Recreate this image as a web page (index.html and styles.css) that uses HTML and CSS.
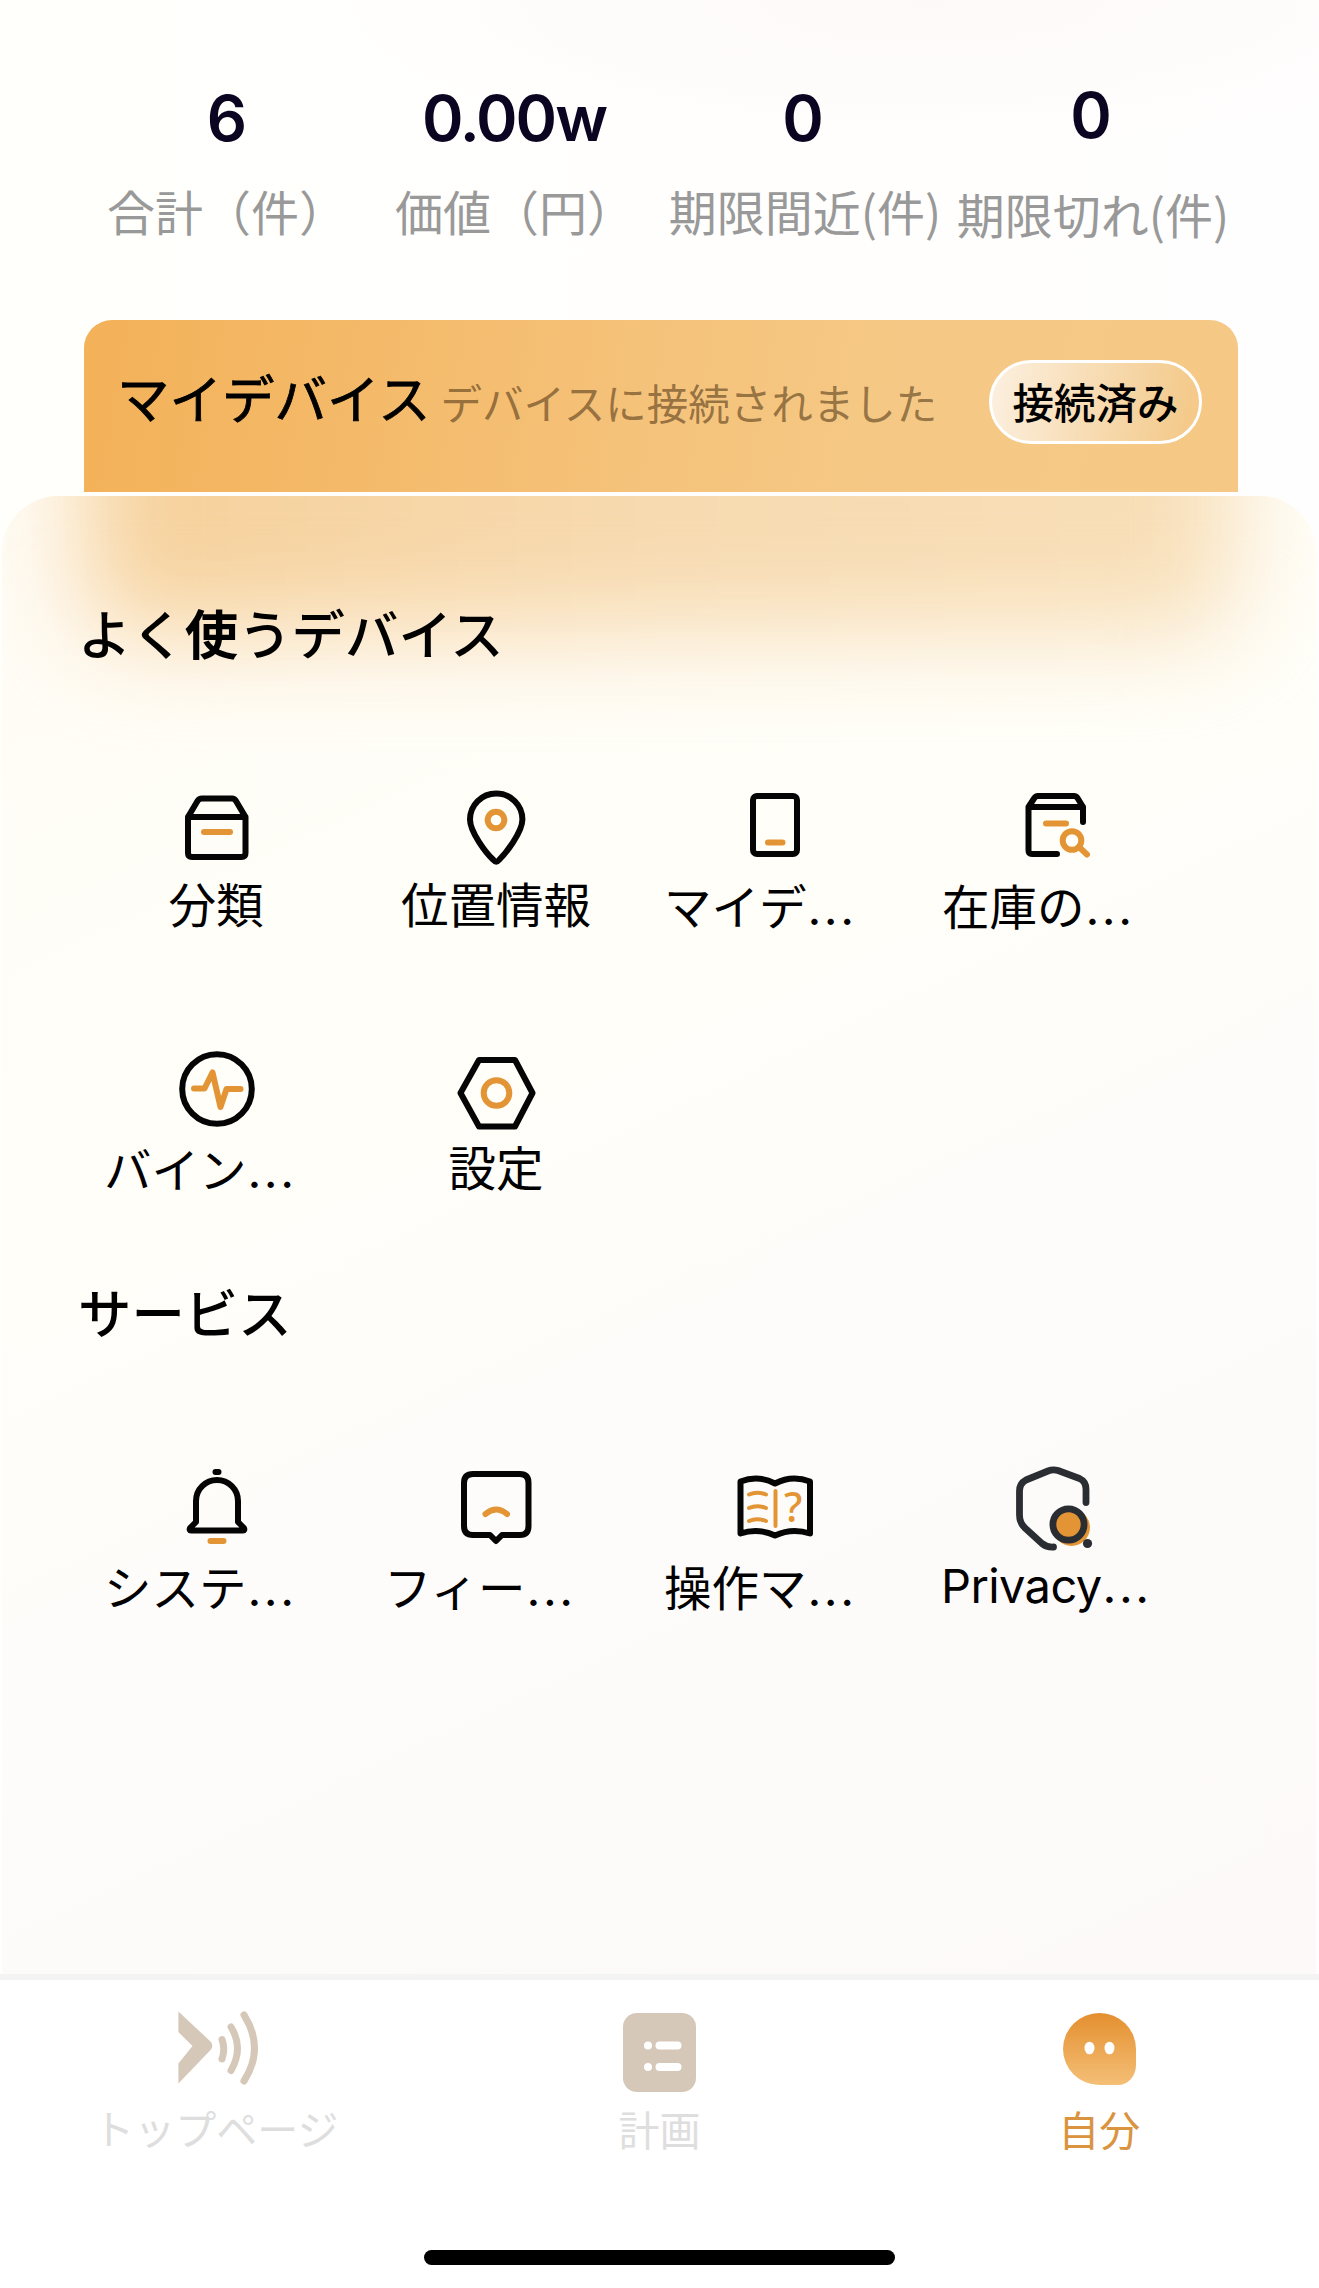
FILE: index.html
```html
<!DOCTYPE html>
<html lang="ja">
<head>
    <meta charset="UTF-8">
    <meta name="viewport" content="width=device-width, initial-scale=1.0">
    <title>自分</title>
    <link rel="stylesheet" href="styles.css">
</head>
<body>
<div class="app">
    <section class="stats">
        <div class="stat"><strong>6</strong><span>合計（件）</span></div>
        <div class="stat"><strong>0.00w</strong><span>価値（円）</span></div>
        <div class="stat stat-wide"><strong>0</strong><span>期限間近(件)</span></div>
        <div class="stat stat-wide stat-expired"><strong>0</strong><span>期限切れ(件)</span></div>
    </section>

    <section class="device-card">
        <h1>マイデバイス</h1>
        <p>デバイスに接続されました</p>
        <button type="button">接続済み</button>
    </section>

    <main class="panel">
        <h2>よく<b>使</b>うデバイス</h2>
        <div class="menu menu-devices">
            <div class="item">
                <svg class="icon" viewBox="0 0 90 90">
                    <path d="M16 32L25.5 16Q27 13.500 30 13.500H60Q62.500 13.500 64 16L73.500 32V68Q73.500 72 69.500 72H20Q16 72 16 68ZM16 32H73.500"/>
                    <path class="accent" d="M32 47H58"/>
                </svg>
                <span class="label">分類</span>
            </div>
            <div class="item">
                <svg class="icon" viewBox="0 0 90 90">
                    <path d="M41.500 75C34 68 18 47 18 34.500A26.200 26 0 0 1 70.400 34.500C70.400 47 54 68 47 75Q44.200 78.500 41.500 75Z"/>
                    <circle class="accent" cx="44" cy="35" r="8.300"/>
                </svg>
                <span class="label">位置情報</span>
            </div>
            <div class="item">
                <svg class="icon" viewBox="0 0 90 90">
                    <rect x="21" y="11" width="44" height="58" rx="4"/>
                    <path class="accent" d="M36 57.500H50.500"/>
                </svg>
                <span class="label cut low">マイデ<i>...</i></span>
            </div>
            <div class="item">
                <svg class="icon" viewBox="0 0 90 90">
                    <path d="M45 69H20Q16.500 69 16.500 65.500V22L22 13.500Q23.500 11 26 11H62Q64 11 65.500 13L71 22V37M16.500 22H71"/>
                    <path class="accent" d="M34 38.500H54M67 62L75 69.500"/>
                    <circle class="accent" cx="60" cy="55.500" r="9.300"/>
                </svg>
                <span class="label cut low last">在庫の<i>...</i></span>
            </div>
            <div class="item">
                <svg class="icon" viewBox="0 3 90 90">
                    <circle cx="45" cy="44" r="34.800"/>
                    <path class="accent" d="M22 43.500H32.500L40.500 27.500L48.500 62L54.500 44H68.500"/>
                </svg>
                <span class="label cut low">バイン<i>...</i></span>
            </div>
            <div class="item">
                <svg class="icon" viewBox="0 3 90 90">
                    <path d="M27 15H63L80.500 48L63 81.500H27L8.500 48Z"/>
                    <circle class="accent" cx="44.500" cy="48" r="12.800"/>
                </svg>
                <span class="label">設定</span>
            </div>
        </div>

        <h2 class="service-title">サービス</h2>
        <div class="menu menu-services">
            <div class="item">
                <svg class="icon" viewBox="0 5 90 90">
                    <path d="M43.500 9H46.500M24 59V38A21 21 0 0 1 66 38V59L72 65Q73 67.500 71 67.500H19Q17 67.500 18 65Z"/>
                    <path class="accent" d="M38.500 78H51.500"/>
                </svg>
                <span class="label cut">システ<i>...</i></span>
            </div>
            <div class="item">
                <svg class="icon" viewBox="0 5 90 90">
                    <path d="M21 11H68Q76.500 11 76.500 20V63Q76.500 72 68 72H50L44 78L38 72H21Q12 72 12 63V20Q12 11 21 11Z"/>
                    <path class="accent" d="M33.500 51Q44 42 55 51"/>
                </svg>
                <span class="label cut">フィー<i>...</i></span>
            </div>
            <div class="item">
                <svg class="icon book" viewBox="0 5 90 90">
                    <path d="M8.500 18.500Q26 11.500 43 20.500Q60 11.500 78 18.500V70.500Q60 64.500 43 72.500Q26 64.500 8.500 70.500Z"/>
                    <path class="accent" d="M43.500 28V63M17 31.500Q25 28 34 31.500M17 45Q25 41.500 34 45M17 58Q25 54.500 34 58"/>
                    <text x="52" y="58.500">?</text>
                </svg>
                <span class="label cut">操作マ<i>...</i></span>
            </div>
            <div class="item">
                <svg class="icon shield" viewBox="0 5 90 90">
                    <path d="M74 39.500V26Q74 18.500 67.500 15.500L46 7.500Q41 6 36 8L14 17Q7.500 20.500 7.500 28V52Q7.500 60 13 65L30 80.500Q35 84.500 41.500 84"/>
                    <circle class="fill" cx="59.500" cy="64.500" r="18.500"/>
                    <circle cx="56.500" cy="61.500" r="15.600"/>
                    <circle class="dot" cx="75.500" cy="80.500" r="4.600"/>
                </svg>
                <span class="label cut latin">Privacy<i>...</i></span>
            </div>
        </div>
    </main>

    <nav class="tabs">
        <a class="tab">
            <svg class="tab-icon" viewBox="0 0 90 90">
                <path d="M3.400 6.500L36 37Q38.500 41 36 44.500L3.400 78.500V58.500L17.500 41L3.400 27Z"/>
                <path class="wave" d="M47 34.500Q50.500 44 47 54M56 22Q69 43 56 65.500M69 10Q90 43 69 76"/>
            </svg>
            <span class="tab-home">トップページ</span>
        </a>
        <a class="tab">
            <svg class="tab-icon" viewBox="0 0 90 90">
                <rect x="9" y="8" width="73" height="79" rx="14"/>
                <g fill="#fff">
                    <circle cx="34" cy="40.500" r="4"/>
                    <rect x="41.500" y="36.500" width="26" height="8" rx="4"/>
                    <circle cx="34" cy="62" r="4"/>
                    <rect x="41.500" y="58" width="26" height="8" rx="4"/>
                </g>
            </svg>
            <span>計画</span>
        </a>
        <a class="tab active">
            <svg class="tab-icon" viewBox="0 0 90 90">
                <defs>
                    <linearGradient id="face" x1="0" y1="0" x2="0" y2="1">
                        <stop offset="0" stop-color="#e48f2f"/>
                        <stop offset="1" stop-color="#f4bf77"/>
                    </linearGradient>
                </defs>
                <path fill="url(#face)" d="M45.500 8A36.500 36 0 0 1 82 44V60A18 20 0 0 1 64 80H45.500A36.500 36 0 0 1 45.500 8Z"/>
                <ellipse cx="35.500" cy="43" rx="5" ry="6.300" fill="#fff"/>
                <ellipse cx="55.500" cy="43" rx="5" ry="6.300" fill="#fff"/>
            </svg>
            <span>自分</span>
        </a>
        <div class="home-bar"></div>
    </nav>
</div>
</body>
</html>
```
FILE: styles.css
```css
* { box-sizing: border-box; }
body { margin: 0; background: #fefefd; color: #000; font-family: "Noto Sans CJK JP", sans-serif; }
h1, h2, p { margin: 0; font-weight: 500; white-space: nowrap; }
.app { width: 1319px; height: 2288px; overflow: hidden; display: flex; flex-direction: column; background: radial-gradient(ellipse 600px 150px at 930px 0, #fdf9f8, transparent), linear-gradient(90deg, #fffffc, #fffefe); }

/* Totals */
.stats { height: 320px; padding: 82px 0 0 82px; display: flex; }
.stat { width: 288px; display: flex; flex-direction: column; align-items: center; white-space: nowrap; }
.stat strong { font: 600 63px/72px Inter, sans-serif; letter-spacing: -2px; color: #0b0522; }
.stat span { margin-top: 21px; padding-left: 2px; font-size: 48px; line-height: 70px; color: #999; }
.stat-wide span { padding-left: 6px; }
.stat-expired { margin-top: -3px; }
.stat-expired span { margin-top: 27px; }

/* Connected device */
.device-card { width: 1154px; height: 172px; margin-left: 84px; padding: 0 36px 8px 33px; display: flex; align-items: center; border-radius: 28px 28px 0 0; background: linear-gradient(100deg, #f3b158, #f5c27a 48%, #f5c985 70%, #f5c886); }
.device-card h1 { padding-bottom: 12px; font-size: 52.500px; font-weight: 400; line-height: 70px; -webkit-text-stroke: 0.800px #000; }
.device-card p { margin-left: 10px; font-size: 41.500px; font-weight: 400; color: rgba(70, 45, 15, 0.550); }
.device-card button { width: 213px; height: 84px; margin-left: auto; padding: 0 0 2px; border: 3.500px solid #fff; border-radius: 42px; background: linear-gradient(100deg, #fcf0e0, #f4cd92 85%, #f5c886); font: 500 41.500px/60px "Noto Sans CJK JP", sans-serif; color: #000; white-space: nowrap; }

/* Main sheet, tinted by the card above it */
.panel { position: relative; overflow: hidden; height: 1478px; margin: 4px 3px 0 2px; padding: 96px 0 0 75px; border-radius: 56px 56px 0 0; background: linear-gradient(155deg, #fffcf5 0, #fffef8 35%, #fdfcfb 62%, #fcf9f8 100%); }
.panel::before { content: ""; position: absolute; left: 84px; top: -140px; width: 1148px; height: 276px; border-radius: 40px; background: linear-gradient(90deg, #f6d09a, #f7dab0 50%, #f8dfb8); filter: blur(50px); }
.panel h2 { position: relative; font-size: 53.400px; line-height: 80px; margin-left: 1px; }
.panel h2 b { font-weight: 700; }
.menu { display: grid; grid-template-columns: repeat(4, 280px); row-gap: 113px; }
.menu-devices { margin-top: 113px; }
.item { height: 150px; display: flex; flex-direction: column; align-items: center; }
.label { width: 226px; margin-top: -2px; padding-right: 2px; font-size: 47.500px; line-height: 60px; text-align: center; white-space: nowrap; }
.label.cut { padding: 0; text-align: left; }
.label.cut.low { padding-top: 2px; }
.label.last { margin-left: -4px; }
.label i { margin-left: 1px; font: 400 48px/1 Inter, sans-serif; letter-spacing: 2.500px; }
.label.latin { margin-left: -6px; font-family: Inter, sans-serif; font-size: 47px; letter-spacing: -0.600px; }
.panel .service-title { margin-top: 73px; }
.menu-services { margin-top: 117px; }

/* Line icons */
.icon { width: 90px; height: 90px; flex: none; overflow: visible; fill: none; stroke: #050505; stroke-width: 6; stroke-linecap: round; stroke-linejoin: round; }
.icon .accent { stroke: #e39535; }
.book .accent { stroke-width: 4; }
.book text { font: 500 41px "Noto Sans", sans-serif; fill: #e39535; stroke: none; }
.shield { stroke: #2a2d32; stroke-width: 6.800; }
.shield .fill { fill: #e39535; stroke: none; }
.shield .dot { fill: #2a2d32; stroke: none; }

/* Bottom navigation */
.tabs { height: 314px; padding-top: 25px; display: grid; grid-template-columns: repeat(3, 1fr); grid-template-rows: 245px 15px; border-top: 6px solid #f4f4f5; background: #fff; }
.tab { display: flex; flex-direction: column; align-items: center; font-size: 41px; line-height: 60px; color: #dedede; white-space: nowrap; }
.tab span { margin-top: 3px; }
.tab .tab-home { margin-top: 2px; padding-right: 8px; }
.tab-icon { width: 90px; height: 90px; fill: #d5c8b8; }
.wave { fill: none; stroke: #d5c8b8; stroke-width: 7; stroke-linecap: round; }
.tab.active { color: #da9440; }
.home-bar { grid-column: 1 / -1; justify-self: center; width: 471px; height: 15px; border-radius: 8px; background: #000; }
```
